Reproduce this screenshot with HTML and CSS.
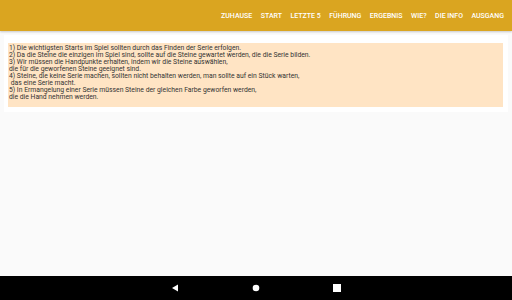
FILE: index.html
```html
<!DOCTYPE html>
<html lang="de">

<head>
  <meta charset="UTF-8">
  <meta name="viewport" content="width=device-width, initial-scale=1.0">
  <title>Regeln</title>
  <link rel="stylesheet" href="styles.css">
</head>

<body>
  <header class="topbar">
    <nav class="menu">
      <a href="#">Zuhause</a>
      <a href="#">Start</a>
      <a href="#">Letzte 5</a>
      <a href="#">Führung</a>
      <a href="#">Ergebnis</a>
      <a href="#">Wie?</a>
      <a href="#">Die Info</a>
      <a href="#">Ausgang</a>
    </nav>
  </header>

  <main class="content">
    <div class="card">
      <div class="rules">
        1) Die wichtigsten Starts im Spiel sollten durch das Finden der Serie erfolgen.<br>
        2) Da die Steine die einzigen im Spiel sind, sollte auf die Steine gewartet werden, die die Serie bilden.<br>
        3) Wir müssen die Handpunkte erhalten, indem wir die Steine auswählen,<br>
        die für die geworfenen Steine geeignet sind.<br>
        4) Steine, die keine Serie machen, sollten nicht behalten werden, man sollte auf ein Stück warten,<br>
        &nbsp;das eine Serie macht.<br>
        5) In Ermangelung einer Serie müssen Steine der gleichen Farbe geworfen werden,<br>
        die die Hand nehmen werden.
      </div>
    </div>
  </main>

  <footer class="navbar">
    <svg class="nav-icon" width="8" height="8" viewBox="0 0 8 8"><polygon points="1,4 7,0.5 7,7.5" fill="#fff"/></svg>
    <svg class="nav-icon" width="8" height="8" viewBox="0 0 8 8"><circle cx="4" cy="4" r="3.3" fill="#fff"/></svg>
    <svg class="nav-icon" width="8" height="8" viewBox="0 0 8 8"><rect x="0" y="0" width="8" height="8" fill="#fff"/></svg>
  </footer>
</body>

</html>
```

FILE: styles.css
```css
body {
  margin: 0;
  padding: 0;
  height: 100vh;
  display: flex;
  flex-direction: column;
  font-family: Roboto, "Liberation Sans", sans-serif;
  background-color: #fafafa;
  color: #333;
}

.topbar {
  height: 31px;
  background-color: #daa520;
  box-shadow: 0 1px 2px rgba(0, 0, 0, 0.2);
  display: flex;
  justify-content: flex-end;
  align-items: center;
  padding-right: 8px;
}

.menu {
  display: flex;
  gap: 8.5px;
}

.menu a {
  color: #fff;
  text-decoration: none;
  text-transform: uppercase;
  font-size: 7px;
  font-weight: 500;
}

.content {
  flex: 1;
  padding: 4px 4px 0 4px;
}

.card {
  background-color: #fff;
  padding: 8px 5px 5px 4px;
}

.rules {
  background-color: #ffe4c4;
  font-size: 6.8px;
  line-height: 7.1px;
  padding: 1.5px 1px 6px 1px;
  color: #333;
}

.navbar {
  height: 24px;
  background-color: #000;
  display: flex;
  justify-content: center;
  align-items: center;
  gap: 73px;
}
```
